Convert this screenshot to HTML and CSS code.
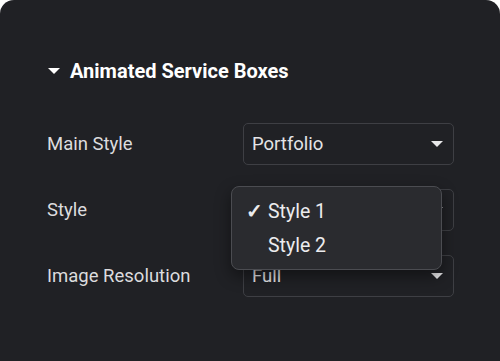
FILE: index.html
```html
<!DOCTYPE html>
<html lang="en">
<head>
    <meta charset="UTF-8">
    <title>Animated Service Boxes</title>
    <link rel="stylesheet" href="styles.css">
</head>
<body>
    <div class="panel">
        <h2 class="section-title">
            <span class="caret"></span>
            Animated Service Boxes
        </h2>

        <div class="controls">
            <div class="control">
                <label>Main Style</label>
                <div class="select">
                    <span>Portfolio</span>
                    <span class="arrow"></span>
                </div>
            </div>

            <div class="control">
                <label>Style</label>
                <div class="select">
                    <span></span>
                    <span class="arrow"></span>
                    <!-- open dropdown menu -->
                    <ul class="menu">
                        <li class="checked"><span class="check">&#10003;</span>Style 1</li>
                        <li><span class="check"></span>Style 2</li>
                    </ul>
                </div>
            </div>

            <div class="control">
                <label>Image Resolution</label>
                <div class="select">
                    <span>Full</span>
                    <span class="arrow"></span>
                </div>
            </div>
        </div>
    </div>
</body>
</html>
```

FILE: styles.css
```css
* {
    box-sizing: border-box;
    margin: 0;
    padding: 0;
}

body {
    font-family: Roboto, 'Noto Sans', sans-serif;
    background: #fff;
}

.panel {
    height: 361px;
    background: #202125;
    border-radius: 14px 14px 0 0;
    padding: 58px 46px 0 47px;
}

.section-title {
    display: flex;
    align-items: center;
    gap: 10px;
    font-size: 20px;
    font-weight: 700;
    color: #fff;
    height: 26px;
}

.caret {
    width: 0;
    height: 0;
    border-left: 6px solid transparent;
    border-right: 6px solid transparent;
    border-top: 6px solid #fff;
    margin-left: 1px;
}

.controls {
    margin-top: 39px;
    display: flex;
    flex-direction: column;
    gap: 24px;
}

.control {
    display: grid;
    grid-template-columns: 196px 1fr;
    align-items: center;
}

.control label {
    font-size: 18.5px;
    color: #dcdcde;
}

.select {
    position: relative;
    height: 42px;
    border: 1px solid #3e3f44;
    border-radius: 5px;
    display: flex;
    align-items: center;
    justify-content: space-between;
    padding: 0 10px 0 8px;
    font-size: 18.5px;
    color: #e4e4e6;
}

.arrow {
    width: 0;
    height: 0;
    border-left: 6px solid transparent;
    border-right: 6px solid transparent;
    border-top: 6px solid #e8e8ea;
}

.menu {
    position: absolute;
    left: -13px;
    top: -4px;
    width: 211px;
    list-style: none;
    background: #2a2b2f;
    border: 1px solid #4b4c51;
    border-radius: 8px;
    padding: 7px 0;
    box-shadow: 0 6px 16px rgba(0, 0, 0, 0.45);
    z-index: 2;
}

.menu li {
    display: flex;
    align-items: center;
    height: 34px;
    padding-left: 14px;
    font-size: 19.5px;
    color: #ececee;
}

.check {
    width: 22px;
    font-size: 20px;
    font-weight: 700;
}
```
